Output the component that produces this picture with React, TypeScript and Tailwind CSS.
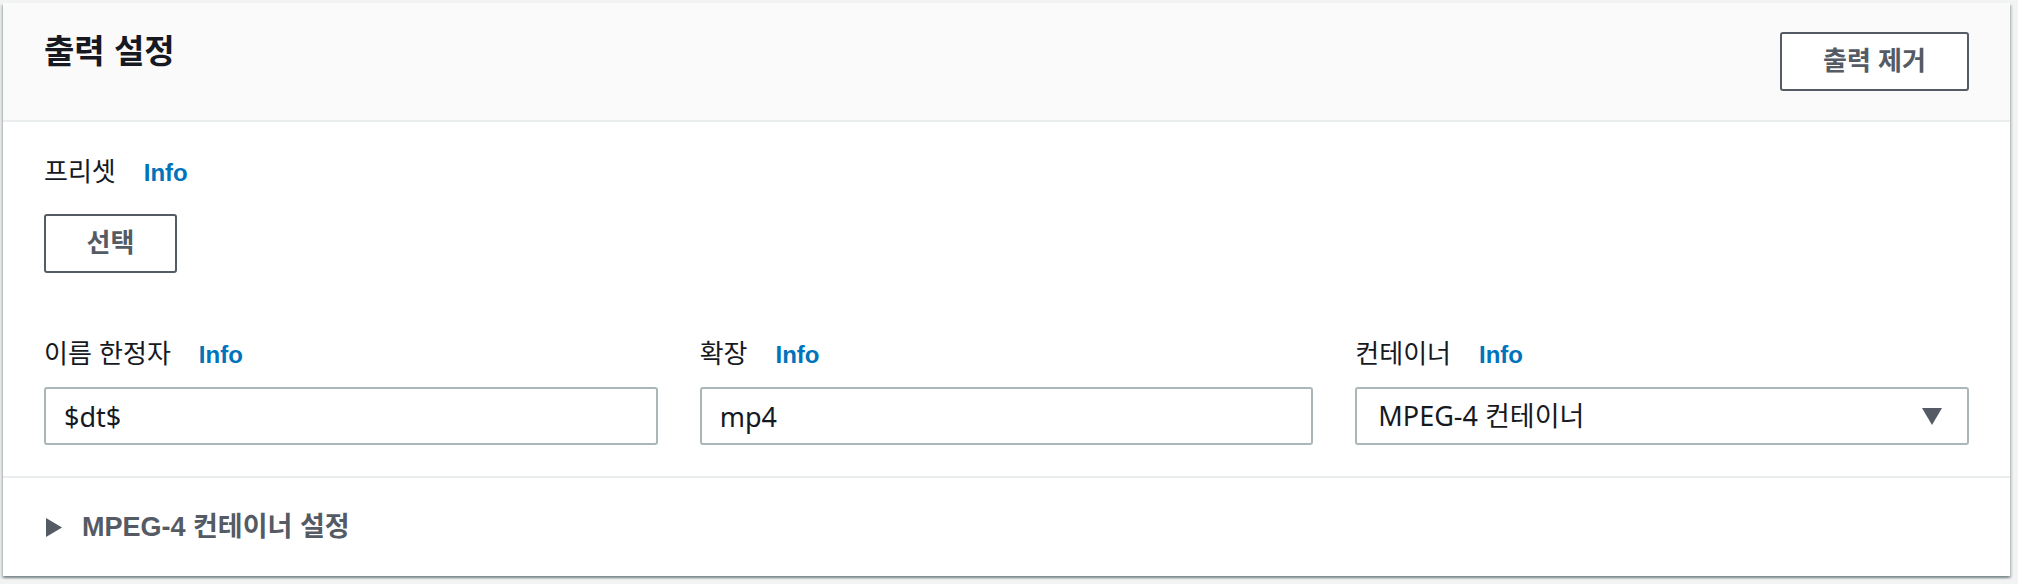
import React from "react";

const sans = "font-['Liberation_Sans','Noto_Sans_CJK_KR',sans-serif]";

function FieldLabel({ text }: { text: string }) {
  return (
    <div className={`flex items-baseline h-[32px] leading-[32px] ${sans}`}>
      <span className="text-[26px] text-[#16191f]">{text}</span>
      <a className="ml-[28px] text-[24px] font-bold text-[#0073bb]">Info</a>
    </div>
  );
}

function TextInput({ value }: { value: string }) {
  return (
    <input
      readOnly
      defaultValue={value}
      className="mt-[17px] h-[58px] w-full rounded-[3px] border-2 border-[#aab7b8] bg-white px-[18px] text-[27px] text-[#16191f] outline-none font-['Noto_Sans','Noto_Sans_CJK_KR',sans-serif]"
    />
  );
}

export default function App() {
  return (
    <div className="w-[2018px] h-[584px] bg-[#f2f3f3] pt-[3px] pl-[3px] pr-[8px]">
      <div className="w-full bg-white shadow-[0_2px_2px_0_rgba(0,28,36,0.3),2px_2px_2px_0_rgba(0,28,36,0.15),-2px_2px_2px_0_rgba(0,28,36,0.15)]">
        {/* header */}
        <div className="h-[119px] bg-[#fafafa] border-b-2 border-[#eaeded] px-[41px] pt-[29px] flex items-start justify-between">
          <h2 className={`text-[33px] leading-[40px] font-bold text-[#16191f] ${sans}`}>출력 설정</h2>
          <button className={`w-[189px] h-[59px] rounded-[3px] border-2 border-[#545b64] bg-white text-[26px] font-bold text-[#545b64] flex items-center justify-center ${sans}`}>
            출력 제거
          </button>
        </div>

        {/* body */}
        <div className="px-[41px] pt-[34px] pb-[31px] border-b-2 border-[#eaeded]">
          <FieldLabel text="프리셋" />
          <button className={`mt-[26px] w-[133px] h-[59px] rounded-[3px] border-2 border-[#545b64] bg-white text-[26px] font-bold text-[#545b64] flex items-center justify-center ${sans}`}>
            선택
          </button>

          <div className="mt-[65px] grid grid-cols-3 gap-x-[42px]">
            <div>
              <FieldLabel text="이름 한정자" />
              <TextInput value="$dt$" />
            </div>
            <div>
              <FieldLabel text="확장" />
              <TextInput value="mp4" />
            </div>
            <div>
              <FieldLabel text="컨테이너" />
              <div className="mt-[17px] h-[58px] w-full rounded-[3px] border-2 border-[#aab7b8] bg-white pl-[21px] pr-[25px] flex items-center justify-between">
                <span className="text-[27px] text-[#16191f] font-['Noto_Sans','Noto_Sans_CJK_KR',sans-serif]">MPEG-4 컨테이너</span>
                <svg width="20" height="17" viewBox="0 0 20 17">
                  <polygon points="0,0 20,0 10,17" fill="#545b64" />
                </svg>
              </div>
            </div>
          </div>
        </div>

        {/* expandable section */}
        <div className="h-[98px] pl-[43px] flex items-center">
          <svg width="16" height="19" viewBox="0 0 16 19">
            <polygon points="0,0 16,9.5 0,19" fill="#545b64" />
          </svg>
          <span className={`ml-[20px] text-[27px] font-bold text-[#545b64] ${sans}`}>MPEG-4 컨테이너 설정</span>
        </div>
      </div>
    </div>
  );
}
